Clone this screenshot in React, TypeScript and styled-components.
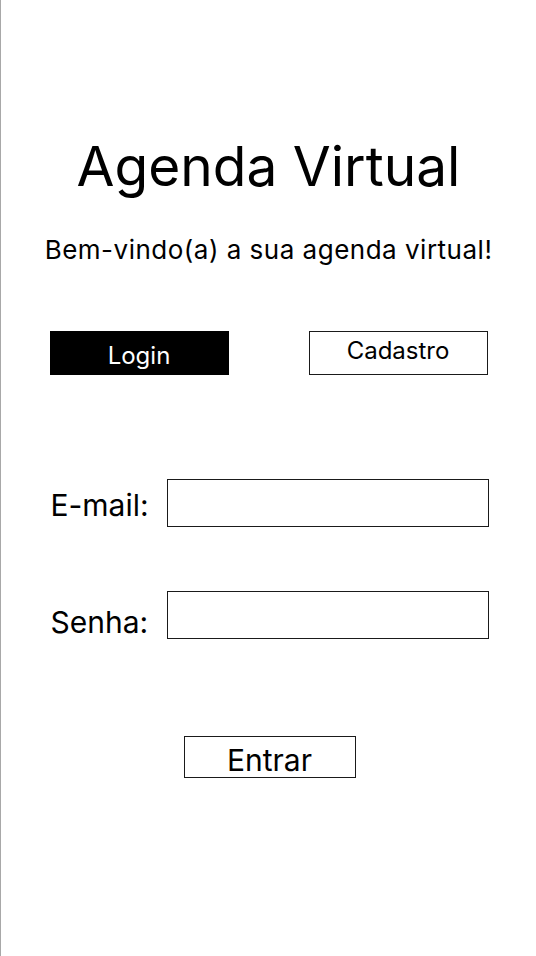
import styled, { createGlobalStyle } from "styled-components";

const GlobalStyle = createGlobalStyle`
    * {
        box-sizing: border-box;
    }

    body {
        margin: 0;
        background: #ffffff;
        font-family: Inter, "Noto Sans", sans-serif;
        color: #000000;
    }

    button, input {
        font: inherit;
    }
`

export default function App() {
    return (
        <>
            <GlobalStyle/>
            <Page>
                <Title>Agenda Virtual</Title>
                <Subtitle>Bem-vindo(a) a sua agenda virtual!</Subtitle>
                <Tabs>
                    <TabButton $active>Login</TabButton>
                    <TabButton>Cadastro</TabButton>
                </Tabs>
                <Form>
                    <Field>
                        <Label $drop={11}>E-mail:</Label>
                        <Input type="email"/>
                    </Field>
                    <Field>
                        <Label $drop={16}>Senha:</Label>
                        <Input type="password"/>
                    </Field>
                </Form>
                <SubmitButton>Entrar</SubmitButton>
            </Page>
        </>
    );
}

const Page = styled.div`
    width: 536px;
    height: 956px;
    border-left: 1px solid #a8a8a8;
    display: flex;
    flex-direction: column;
    align-items: center;
    padding-top: 139px;
    overflow: hidden;
`

const Title = styled.h1`
    margin: 0;
    font-weight: 400;
    font-size: 55px;
    line-height: 55px;
`

const Subtitle = styled.p`
    margin: 43px 0 0;
    font-size: 26px;
    line-height: 26px;
    letter-spacing: 0.5px;
`

const Tabs = styled.div`
    margin-top: 68px;
    width: 438px;
    display: flex;
    justify-content: space-between;
`

const TabButton = styled.button<{ $active?: boolean }>`
    width: 179px;
    height: 44px;
    font-size: 24px;
    line-height: 24px;
    padding: ${p => p.$active ? "5px 0 0" : "0 0 5px"};
    display: flex;
    align-items: center;
    justify-content: center;
    background: ${p => p.$active ? "#000000" : "#ffffff"};
    color: ${p => p.$active ? "#ffffff" : "#000000"};
    border: ${p => p.$active ? "none" : "1px solid #1a1a1a"};
    cursor: pointer;
`

const Form = styled.div`
    margin-top: 104px;
    width: 438px;
    margin-left: 2px;
    display: flex;
    flex-direction: column;
    gap: 64px;
`

const Field = styled.label`
    display: flex;
    align-items: flex-start;
    gap: 20px;
    height: 48px;
`

const Label = styled.span<{ $drop: number }>`
    flex-shrink: 0;
    width: 96px;
    font-size: 30px;
    line-height: 30px;
    padding-top: ${p => p.$drop}px;
    white-space: nowrap;
`

const Input = styled.input`
    flex: 1;
    min-width: 0;
    height: 48px;
    border: 1px solid #1a1a1a;
    font-size: 20px;
    padding: 0 10px;
    background: #ffffff;
    outline: none;
`

const SubmitButton = styled.button`
    margin-top: 97px;
    margin-left: 2px;
    width: 172px;
    height: 42px;
    border: 1px solid #1a1a1a;
    background: #ffffff;
    font-size: 30px;
    line-height: 30px;
    color: #000000;
    padding: 6px 0 0;
    cursor: pointer;
`
